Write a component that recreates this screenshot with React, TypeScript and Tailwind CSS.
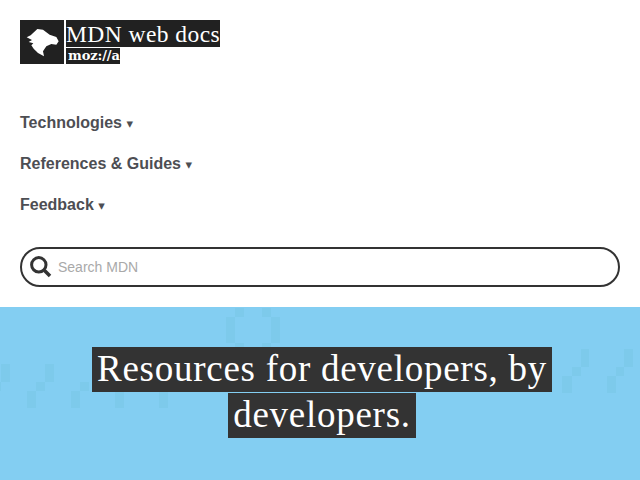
const navItems = ['Technologies', 'References & Guides', 'Feedback'];

// faint pixel pattern behind the hero, [x, y, w, h] relative to the hero
const pixels = [
  [226, 10, 9, 26], [235, 1, 9, 9], [235, 36, 9, 4], [262, 1, 9, 9], [271, 10, 9, 26], [262, 36, 9, 4],
  [1, 57, 9, 18], [-8, 75, 9, 9], [45, 57, 9, 18], [36, 75, 9, 9], [27, 84, 9, 17],
  [80, 75, 9, 9], [71, 84, 9, 17], [115, 84, 9, 17], [159, 84, 9, 17],
  [581, 42, 8, 18], [572, 60, 9, 9], [562, 69, 10, 17],
  [624, 42, 9, 18], [616, 60, 8, 9], [607, 69, 9, 17],
];

function Logo() {
  return (
    <div className="flex gap-[2px] h-11">
      <div className="w-11 h-11 bg-[#212121]">
        <svg viewBox="6 6 132 132" className="w-11 h-11">
          <path
            fill="#fff"
            d="M38 52 L58 33 L75 35 L95 50 L115 57 L122 70 L115 80 L100 78 L85 85 L75 100 L78 115 L60 105 L47 92 L40 82 L46 76 L32 72 L42 66 L26 58 Z"
          />
        </svg>
      </div>
      <div className="flex flex-col gap-[1px]">
        <div className="w-[154px] h-[27px] bg-[#212121] text-white font-['Liberation_Serif',serif] text-[23.5px] leading-[28px] whitespace-nowrap tracking-[0.45px]">
          MDN web docs
        </div>
        <div className="w-[54px] h-4 bg-[#212121] text-white font-['DejaVu_Serif',serif] font-bold text-[13px] leading-4 pl-[2px] whitespace-nowrap tracking-[-0.1px]">
          moz://a
        </div>
      </div>
    </div>
  );
}

function SearchIcon() {
  return (
    <svg viewBox="0 0 22 22" className="w-[22px] h-[22px] shrink-0" fill="none" stroke="#333">
      <circle cx="8.8" cy="8.8" r="7.2" strokeWidth="3" />
      <path d="M14.5 14.5 L20 20" strokeWidth="3.6" />
    </svg>
  );
}

export default function App() {
  return (
    <div className="w-[640px] h-[480px] overflow-hidden bg-white font-['Liberation_Sans',sans-serif]">
      <header className="h-[307px] px-5 pt-5">
        <Logo />
        <nav className="mt-[48px] flex flex-col gap-[19px]">
          {navItems.map((item) => (
            <a key={item} className="h-[22px] leading-[22px] text-base font-bold text-[#4d4e53] whitespace-nowrap">
              {item} <span className="font-['DejaVu_Sans',sans-serif] font-normal text-[13px]">▾</span>
            </a>
          ))}
        </nav>
        <div className="mt-[31px] h-10 rounded-full border-2 border-[#333] flex items-center pl-2 pr-4">
          <SearchIcon />
          <span className="ml-[6px] text-sm text-[#a9a9a9]">Search MDN</span>
        </div>
      </header>
      <section className="relative h-[173px] bg-[#83cef2] pt-[39px] text-center">
        {pixels.map(([x, y, w, h], i) => (
          <div key={i} className="absolute bg-[#7dcaeb]" style={{ left: x, top: y, width: w, height: h }} />
        ))}
        <h1 className="relative ml-[82px] w-[480px] font-['Liberation_Serif',serif] font-normal text-[37px] leading-[46px] tracking-[0.73px] text-white">
          <span className="bg-[#333] px-[5px] pt-[1px] pb-[3px] box-decoration-clone">Resources for developers, by developers.</span>
        </h1>
      </section>
    </div>
  );
}
